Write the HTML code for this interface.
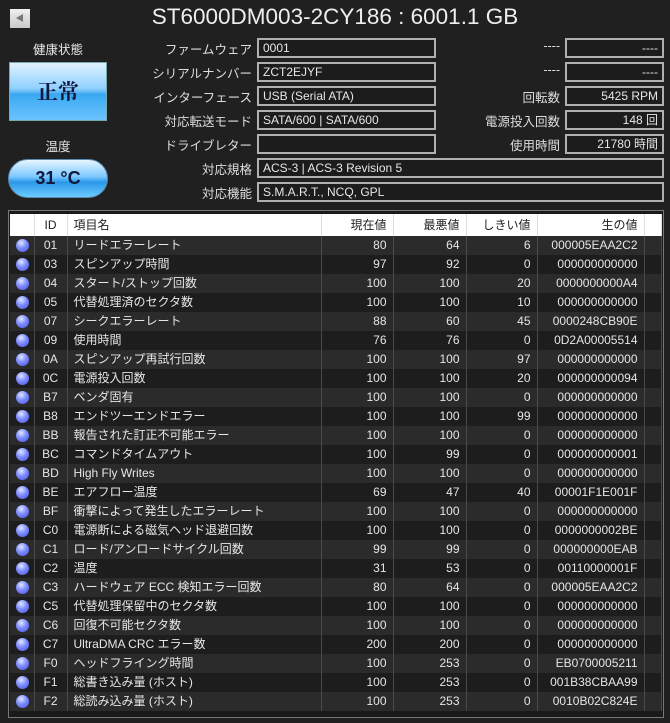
<!DOCTYPE html><html><head><meta charset="utf-8"><style>
body{margin:0;width:670px;height:723px;background:#202020;font-family:"Liberation Sans","Noto Sans CJK JP",sans-serif;color:#e6e6e6;position:relative;overflow:hidden;font-size:12px}
.a{position:absolute}
.lab{position:absolute;text-align:right;font-size:12.5px;color:#ddd}
.box{position:absolute;border:2px solid #b0b0b0;box-sizing:border-box;height:20px;line-height:16px;padding:0 4px;font-size:12px;color:#e6e6e6;background:#1c1c1c}
table{border-collapse:collapse;position:absolute;left:10px;top:214px;width:652px;table-layout:fixed}
td{height:19px;line-height:19px;padding:0 6px;font-size:12px;border-right:1px solid #4a4a4a;white-space:nowrap;overflow:hidden;box-sizing:border-box}
tr:nth-child(odd) td{background:#1d1d1d}tr:nth-child(even) td{background:#2b2b2b}
tr.h td{background:#fff;color:#222;height:22px;line-height:22px;border-right:1px solid #ddd}
.r{text-align:right}.c{text-align:center}
.dot{display:inline-block;width:13px;height:13px;border-radius:50%;background:radial-gradient(circle at 40% 30%,#e0e8ff,#7d8cff 45%,#4a50e0);vertical-align:middle}
</style></head><body>
<div class="a" style="left:10px;top:9px;width:20px;height:19px;background:linear-gradient(#f0f0f0,#c8c8c8)"><div style="position:absolute;left:6px;top:5px;border-right:7px solid #777;border-top:4.5px solid transparent;border-bottom:4.5px solid transparent"></div></div>
<div class="a" style="left:0;width:670px;top:4px;text-align:center;font-size:22.5px;color:#eee">ST6000DM003-2CY186 : 6001.1 GB</div>
<div class="a" style="left:9px;width:98px;top:39px;text-align:center;font-size:12.5px">健康状態</div>
<div class="a" style="left:9px;top:62px;width:98px;height:59px;background:linear-gradient(#dff2ff,#8fd0ff 45%,#3aa8f0 55%,#6cc4ff);border:1px solid #7aa;box-sizing:border-box;text-align:center;line-height:57px;font-size:21px;font-weight:bold;color:#101840;font-family:'Noto Serif CJK SC',serif">正常</div>
<div class="a" style="left:9px;width:98px;top:136px;text-align:center;font-size:12.5px">温度</div>
<div class="a" style="left:8px;top:159px;width:100px;height:39px;border-radius:20px;background:linear-gradient(#e8f6ff,#7cc8ff 45%,#2a98e8 60%,#6ccaff);border:1px solid #5a8ab0;box-sizing:border-box;text-align:center;line-height:37px;font-size:18px;font-weight:bold;color:#101840">31 °C</div>
<div class="lab" style="right:418px;top:39px">ファームウェア</div><div class="box" style="left:257px;top:38px;width:179px">0001</div>
<div class="lab" style="right:418px;top:63px">シリアルナンバー</div><div class="box" style="left:257px;top:62px;width:179px">ZCT2EJYF</div>
<div class="lab" style="right:418px;top:87px">インターフェース</div><div class="box" style="left:257px;top:86px;width:179px">USB (Serial ATA)</div>
<div class="lab" style="right:418px;top:111px">対応転送モード</div><div class="box" style="left:257px;top:110px;width:179px">SATA/600 | SATA/600</div>
<div class="lab" style="right:418px;top:135px">ドライブレター</div><div class="box" style="left:257px;top:134px;width:179px"></div>
<div class="lab" style="right:418px;top:159px">対応規格</div><div class="box" style="left:257px;top:158px;width:407px">ACS-3 | ACS-3 Revision 5</div>
<div class="lab" style="right:418px;top:183px">対応機能</div><div class="box" style="left:257px;top:182px;width:407px">S.M.A.R.T., NCQ, GPL</div>
<div class="lab" style="right:110px;top:39px">----</div><div class="box r" style="left:565px;top:38px;width:99px">----</div>
<div class="lab" style="right:110px;top:63px">----</div><div class="box r" style="left:565px;top:62px;width:99px">----</div>
<div class="lab" style="right:110px;top:87px">回転数</div><div class="box r" style="left:565px;top:86px;width:99px">5425 RPM</div>
<div class="lab" style="right:110px;top:111px">電源投入回数</div><div class="box r" style="left:565px;top:110px;width:99px">148 回</div>
<div class="lab" style="right:110px;top:135px">使用時間</div><div class="box r" style="left:565px;top:134px;width:99px">21780 時間</div>
<div class="a" style="left:8px;top:210px;width:656px;height:508px;border:1px solid #777;box-sizing:border-box;background:#1a1a1a"></div>
<table>
<colgroup><col style="width:24px"><col style="width:33px"><col style="width:254px"><col style="width:72px"><col style="width:73px"><col style="width:71px"><col style="width:107px"><col></colgroup>
<tr class="h"><td></td><td class="c">ID</td><td>項目名</td><td class="r">現在値</td><td class="r">最悪値</td><td class="r">しきい値</td><td class="r">生の値</td><td></td></tr>
<tr><td><span class="dot"></span></td><td class="c">01</td><td>リードエラーレート</td><td class="r">80</td><td class="r">64</td><td class="r">6</td><td class="r">000005EAA2C2</td><td></td></tr>
<tr><td><span class="dot"></span></td><td class="c">03</td><td>スピンアップ時間</td><td class="r">97</td><td class="r">92</td><td class="r">0</td><td class="r">000000000000</td><td></td></tr>
<tr><td><span class="dot"></span></td><td class="c">04</td><td>スタート/ストップ回数</td><td class="r">100</td><td class="r">100</td><td class="r">20</td><td class="r">0000000000A4</td><td></td></tr>
<tr><td><span class="dot"></span></td><td class="c">05</td><td>代替処理済のセクタ数</td><td class="r">100</td><td class="r">100</td><td class="r">10</td><td class="r">000000000000</td><td></td></tr>
<tr><td><span class="dot"></span></td><td class="c">07</td><td>シークエラーレート</td><td class="r">88</td><td class="r">60</td><td class="r">45</td><td class="r">0000248CB90E</td><td></td></tr>
<tr><td><span class="dot"></span></td><td class="c">09</td><td>使用時間</td><td class="r">76</td><td class="r">76</td><td class="r">0</td><td class="r">0D2A00005514</td><td></td></tr>
<tr><td><span class="dot"></span></td><td class="c">0A</td><td>スピンアップ再試行回数</td><td class="r">100</td><td class="r">100</td><td class="r">97</td><td class="r">000000000000</td><td></td></tr>
<tr><td><span class="dot"></span></td><td class="c">0C</td><td>電源投入回数</td><td class="r">100</td><td class="r">100</td><td class="r">20</td><td class="r">000000000094</td><td></td></tr>
<tr><td><span class="dot"></span></td><td class="c">B7</td><td>ベンダ固有</td><td class="r">100</td><td class="r">100</td><td class="r">0</td><td class="r">000000000000</td><td></td></tr>
<tr><td><span class="dot"></span></td><td class="c">B8</td><td>エンドツーエンドエラー</td><td class="r">100</td><td class="r">100</td><td class="r">99</td><td class="r">000000000000</td><td></td></tr>
<tr><td><span class="dot"></span></td><td class="c">BB</td><td>報告された訂正不可能エラー</td><td class="r">100</td><td class="r">100</td><td class="r">0</td><td class="r">000000000000</td><td></td></tr>
<tr><td><span class="dot"></span></td><td class="c">BC</td><td>コマンドタイムアウト</td><td class="r">100</td><td class="r">99</td><td class="r">0</td><td class="r">000000000001</td><td></td></tr>
<tr><td><span class="dot"></span></td><td class="c">BD</td><td>High Fly Writes</td><td class="r">100</td><td class="r">100</td><td class="r">0</td><td class="r">000000000000</td><td></td></tr>
<tr><td><span class="dot"></span></td><td class="c">BE</td><td>エアフロー温度</td><td class="r">69</td><td class="r">47</td><td class="r">40</td><td class="r">00001F1E001F</td><td></td></tr>
<tr><td><span class="dot"></span></td><td class="c">BF</td><td>衝撃によって発生したエラーレート</td><td class="r">100</td><td class="r">100</td><td class="r">0</td><td class="r">000000000000</td><td></td></tr>
<tr><td><span class="dot"></span></td><td class="c">C0</td><td>電源断による磁気ヘッド退避回数</td><td class="r">100</td><td class="r">100</td><td class="r">0</td><td class="r">0000000002BE</td><td></td></tr>
<tr><td><span class="dot"></span></td><td class="c">C1</td><td>ロード/アンロードサイクル回数</td><td class="r">99</td><td class="r">99</td><td class="r">0</td><td class="r">000000000EAB</td><td></td></tr>
<tr><td><span class="dot"></span></td><td class="c">C2</td><td>温度</td><td class="r">31</td><td class="r">53</td><td class="r">0</td><td class="r">00110000001F</td><td></td></tr>
<tr><td><span class="dot"></span></td><td class="c">C3</td><td>ハードウェア ECC 検知エラー回数</td><td class="r">80</td><td class="r">64</td><td class="r">0</td><td class="r">000005EAA2C2</td><td></td></tr>
<tr><td><span class="dot"></span></td><td class="c">C5</td><td>代替処理保留中のセクタ数</td><td class="r">100</td><td class="r">100</td><td class="r">0</td><td class="r">000000000000</td><td></td></tr>
<tr><td><span class="dot"></span></td><td class="c">C6</td><td>回復不可能セクタ数</td><td class="r">100</td><td class="r">100</td><td class="r">0</td><td class="r">000000000000</td><td></td></tr>
<tr><td><span class="dot"></span></td><td class="c">C7</td><td>UltraDMA CRC エラー数</td><td class="r">200</td><td class="r">200</td><td class="r">0</td><td class="r">000000000000</td><td></td></tr>
<tr><td><span class="dot"></span></td><td class="c">F0</td><td>ヘッドフライング時間</td><td class="r">100</td><td class="r">253</td><td class="r">0</td><td class="r">EB0700005211</td><td></td></tr>
<tr><td><span class="dot"></span></td><td class="c">F1</td><td>総書き込み量 (ホスト)</td><td class="r">100</td><td class="r">253</td><td class="r">0</td><td class="r">001B38CBAA99</td><td></td></tr>
<tr><td><span class="dot"></span></td><td class="c">F2</td><td>総読み込み量 (ホスト)</td><td class="r">100</td><td class="r">253</td><td class="r">0</td><td class="r">0010B02C824E</td><td></td></tr>
</table>
</body></html>
